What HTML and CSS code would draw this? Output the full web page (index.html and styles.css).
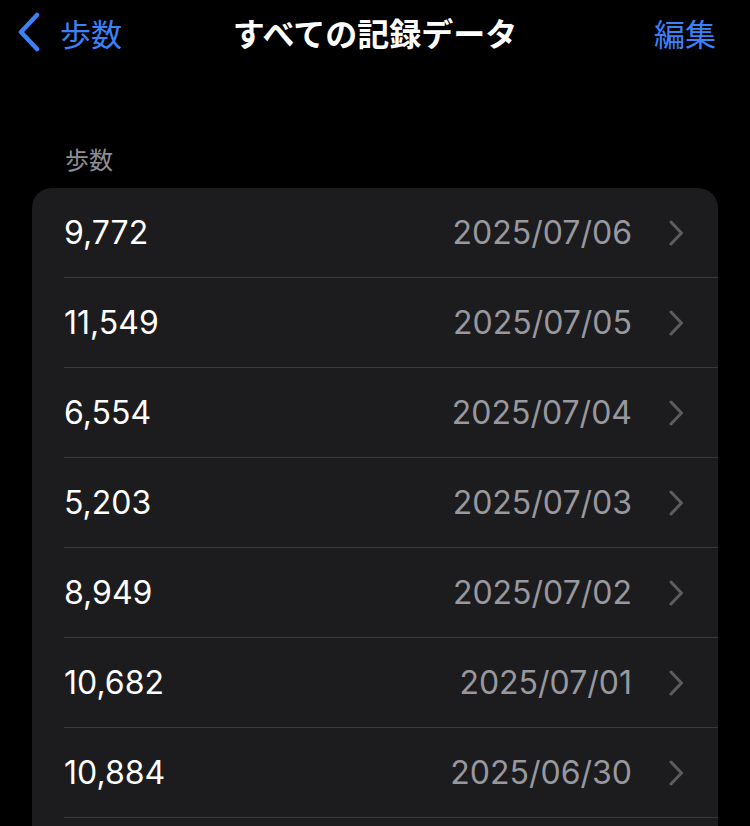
FILE: index.html
```html
<!DOCTYPE html>
<html lang="ja">
<head>
<meta charset="utf-8">
<title>すべての記録データ</title>
<link rel="stylesheet" href="styles.css">
</head>
<body>
	<div class="nav">
		<a class="nav-back" href="#">
			<svg class="nav-chevron" width="26" height="40" viewBox="0 0 26 40"><path d="M21 3 L5 20 L21 37" fill="none" stroke="currentColor" stroke-width="4.5" stroke-linecap="round" stroke-linejoin="round"/></svg>
			<span>歩数</span>
		</a>
		<h1 class="nav-title">すべての記録データ</h1>
		<a class="nav-edit" href="#">編集</a>
	</div>

	<p class="section-head">歩数</p>
	<ul class="list">
		<li class="row"><span class="value">9,772</span><span class="date">2025/07/06</span><svg class="chev" width="16" height="26" viewBox="0 0 16 26"><path d="M3 2 L13.5 13 L3 24" fill="none" stroke="currentColor" stroke-width="3" stroke-linecap="round" stroke-linejoin="round"/></svg></li>
		<li class="row"><span class="value">11,549</span><span class="date">2025/07/05</span><svg class="chev" width="16" height="26" viewBox="0 0 16 26"><path d="M3 2 L13.5 13 L3 24" fill="none" stroke="currentColor" stroke-width="3" stroke-linecap="round" stroke-linejoin="round"/></svg></li>
		<li class="row"><span class="value">6,554</span><span class="date">2025/07/04</span><svg class="chev" width="16" height="26" viewBox="0 0 16 26"><path d="M3 2 L13.5 13 L3 24" fill="none" stroke="currentColor" stroke-width="3" stroke-linecap="round" stroke-linejoin="round"/></svg></li>
		<li class="row"><span class="value">5,203</span><span class="date">2025/07/03</span><svg class="chev" width="16" height="26" viewBox="0 0 16 26"><path d="M3 2 L13.5 13 L3 24" fill="none" stroke="currentColor" stroke-width="3" stroke-linecap="round" stroke-linejoin="round"/></svg></li>
		<li class="row"><span class="value">8,949</span><span class="date">2025/07/02</span><svg class="chev" width="16" height="26" viewBox="0 0 16 26"><path d="M3 2 L13.5 13 L3 24" fill="none" stroke="currentColor" stroke-width="3" stroke-linecap="round" stroke-linejoin="round"/></svg></li>
		<li class="row"><span class="value">10,682</span><span class="date">2025/07/01</span><svg class="chev" width="16" height="26" viewBox="0 0 16 26"><path d="M3 2 L13.5 13 L3 24" fill="none" stroke="currentColor" stroke-width="3" stroke-linecap="round" stroke-linejoin="round"/></svg></li>
		<li class="row"><span class="value">10,884</span><span class="date">2025/06/30</span><svg class="chev" width="16" height="26" viewBox="0 0 16 26"><path d="M3 2 L13.5 13 L3 24" fill="none" stroke="currentColor" stroke-width="3" stroke-linecap="round" stroke-linejoin="round"/></svg></li>
	</ul>
</body>
</html>
```

FILE: styles.css
```css
body { margin:0; background:#000; color:#fff; font-family:Inter, "Noto Sans CJK JP", sans-serif; }
a { text-decoration:none; }

.nav { height:64px; display:grid; grid-template-columns:1fr auto 1fr; align-items:center; padding:0 16px; }
.nav-back { display:flex; align-items:center; color:#3a82f6; font-size:31px; font-family:"Noto Sans CJK JP", sans-serif; }
.nav-chevron { display:block; margin-right:18px; }
.nav-title { margin:0; font-size:32px; font-weight:700; font-family:"Noto Sans CJK JP", sans-serif; }
.nav-edit { justify-self:end; margin-right:18px; color:#3a82f6; font-size:31px; font-family:"Noto Sans CJK JP", sans-serif; }

.section-head { margin:80px 0 14px 65px; font-size:24px; line-height:30px; color:#8d8d93; font-family:"Noto Sans CJK JP", sans-serif; }

.list { list-style:none; margin:0 32px; padding:0 0 40px; background:#1c1c1e; border-radius:20px; }
.row { display:flex; align-items:center; height:89px; margin-left:32px; padding-right:34px; border-bottom:1px solid #3a3a3d; font-size:32px; }
.value { flex:1; color:#fff; }
.date { color:#98989e; }
.chev { display:block; margin-left:36px; color:#5c5c61; }
```
